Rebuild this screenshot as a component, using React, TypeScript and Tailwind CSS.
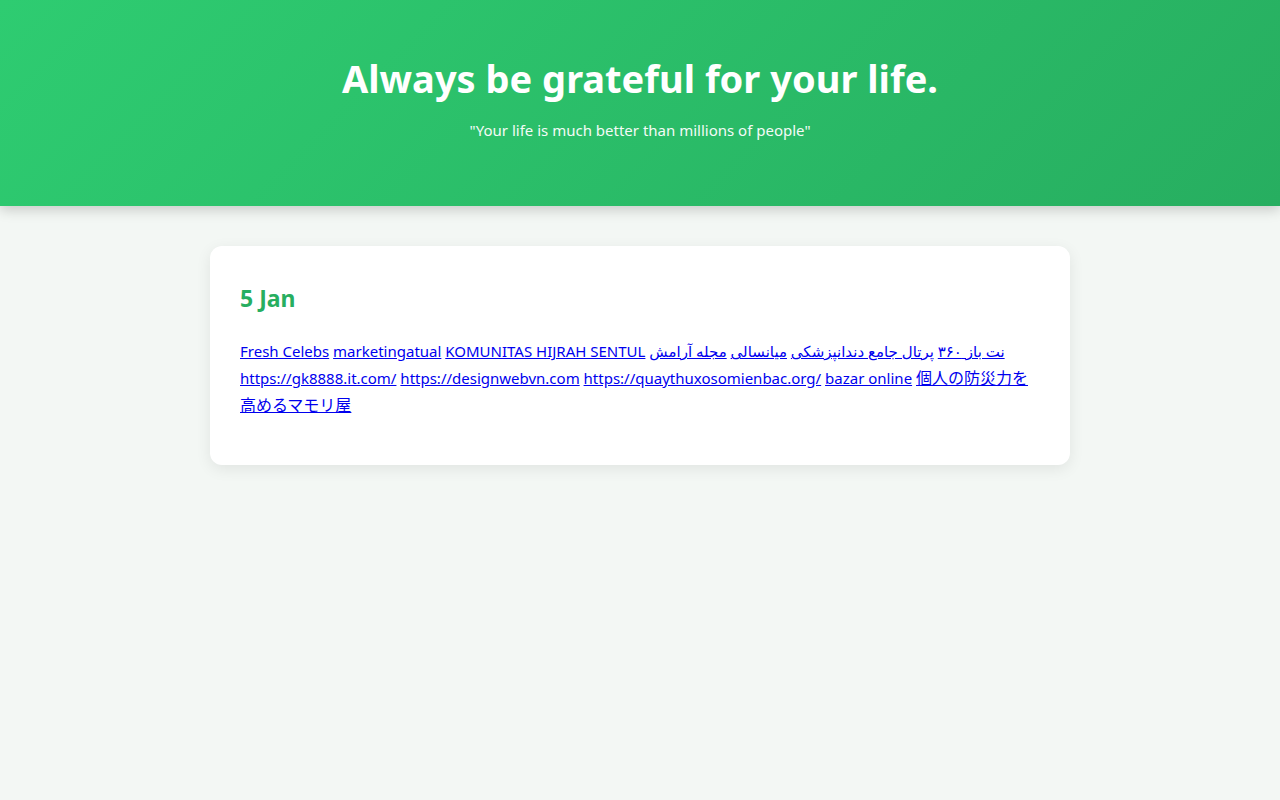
const links = [
  "Fresh Celebs",
  "marketingatual",
  "KOMUNITAS HIJRAH SENTUL",
  "نت باز ۳۶۰",
  "پرتال جامع دندانپزشکی",
  "میانسالی",
  "مجله آرامش",
  "https://gk8888.it.com/",
  "https://designwebvn.com",
  "https://quaythuxosomienbac.org/",
  "bazar online",
];

export default function App() {
  return (
    <div className="min-h-screen bg-[#f3f7f4] font-['Noto_Sans','Noto_Sans_CJK_JP','DejaVu_Sans',sans-serif] text-black">
      <header className="bg-[linear-gradient(135deg,#2ecc71,#27ae60)] pt-[54px] pb-[64px] text-center text-white shadow-[0_4px_12px_rgba(0,0,0,0.18)]">
        <h1 className="text-[38px] font-bold leading-[48px]">Always be grateful for your life.</h1>
        <p className="mt-4 text-[15px] leading-[24px] opacity-95">"Your life is much better than millions of people"</p>
      </header>

      <main className="mx-auto mt-10 w-[860px]">
        <article className="rounded-xl bg-white px-[30px] pt-[30px] pb-[46px] shadow-[0_4px_15px_rgba(0,0,0,0.08)]">
          <h2 className="mt-1 text-[23px] font-bold leading-[36px] text-[#27ae60]">5 Jan</h2>
          <p className="mt-[22px] text-[15px] leading-[27px]">
            {links.map((l, i) => (
              <span key={i}>
                <a href="#" className="text-[#0000ee] underline">{l}</a>{" "}
              </span>
            ))}
            <a href="#" className="text-[16px] text-[#0000ee] underline">個人の防災力を高めるマモリ屋</a>
          </p>
        </article>
      </main>
    </div>
  );
}
